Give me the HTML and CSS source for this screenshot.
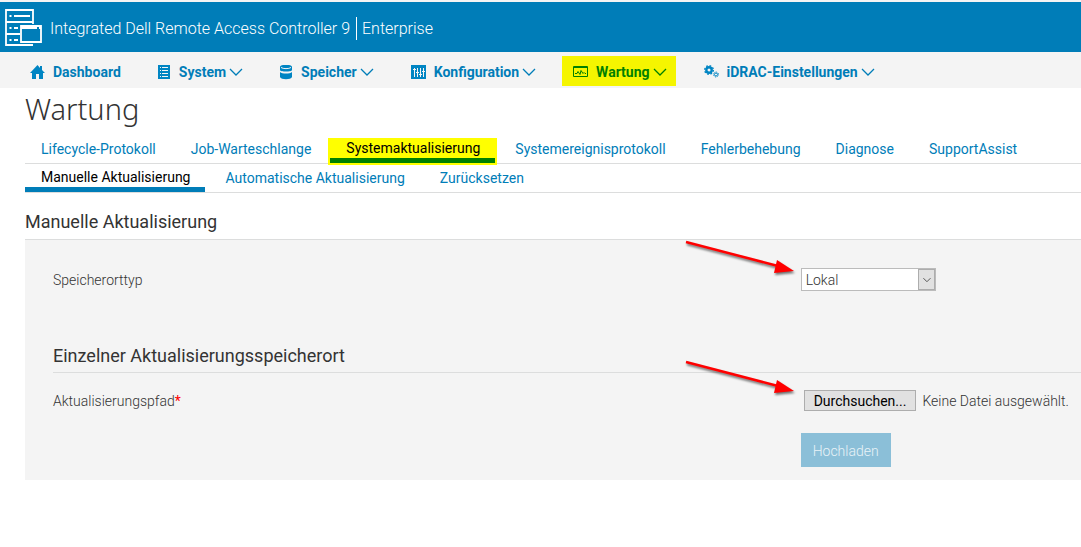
FILE: index.html
```html
<!DOCTYPE html>
<html lang="de">
<head>
<meta charset="utf-8">
<title>iDRAC9 – Wartung</title>
<meta name="viewport" content="width=device-width,initial-scale=1">
<link rel="stylesheet" href="styles.css">
</head>
<body>
<header class="banner">
  <svg class="logo" width="38" height="38" viewBox="0 0 38 38" fill="none" stroke="#fff" stroke-width="1.8">
    <path d="M1 1h27v12H1zM1 13v12h14M1 25v11h27M28 13v2"/>
    <path d="M4.500 7h2M9 7h16M4.500 19h2M9 19h4M4.500 31h2M9 31h4"/>
    <path d="M16 17h20v16H16z"/>
    <path d="M16 18.500h16M34 18.500h2" stroke-width="3"/>
  </svg>
  <span class="product">Integrated Dell Remote Access Controller 9</span>
  <span class="edition">Enterprise</span>
</header>

<nav class="mainnav">
  <a href="#">
    <svg class="ico" viewBox="0 0 15 15"><path fill="currentColor" d="M7.500 0L0 8h2v6h4V9h3v5h4V8h2l-3-3V1h-2v2z"/></svg>
    Dashboard
  </a>
  <a href="#">
    <svg class="ico slim" viewBox="0 0 13 15"><path fill="currentColor" d="M0 0h12v14H0z"/><path stroke="#f4f4f4" d="M2 2.500h1M4 2.500h6M2 5.500h1M4 5.500h6M2 8.500h1M4 8.500h6M2 11.500h1M4 11.500h6"/></svg>
    System
    <svg class="chev" viewBox="0 0 14 8"><path d="M1 1l6 6 6-6"/></svg>
  </a>
  <a href="#">
    <svg class="ico slim" viewBox="0 0 13 15"><path fill="currentColor" d="M0 2c0-3 12-3 12 0v3c0 2-12 2-12 0zM0 7c2 2 10 2 12 0v5c-1 3-11 3-12 0z"/><path fill="none" stroke="#f4f4f4" d="M1 2.500c2 1.500 8 1.500 10 0"/></svg>
    Speicher
    <svg class="chev" viewBox="0 0 14 8"><path d="M1 1l6 6 6-6"/></svg>
  </a>
  <a href="#">
    <svg class="ico" viewBox="0 0 15 15"><path fill="currentColor" d="M0 0h15v14H0z"/><path stroke="#f4f4f4" d="M3.500 3v9M6.500 3v9M9.500 3v9M12.500 3v9M2 4.500h3M5 7.500h3M8 9.500h3M11 6.500h3"/></svg>
    Konfiguration
    <svg class="chev" viewBox="0 0 14 8"><path d="M1 1l6 6 6-6"/></svg>
  </a>
  <a href="#" class="active">
    <svg class="ico" viewBox="0 0 15 15" fill="none" stroke="currentColor"><path d="M.5 1.500h14v10H.5zM.5 2.500h14"/><path d="M2 8.500h2l1-2 2 3 1-4 2 3 1-1 1 1h1"/></svg>
    Wartung
    <svg class="chev" viewBox="0 0 14 8"><path d="M1 1l6 6 6-6"/></svg>
  </a>
  <a href="#">
    <svg class="ico" viewBox="0 0 15 15" fill="none" stroke="currentColor">
      <circle cx="5" cy="5" r="2.700" stroke-width="2.400"/>
      <circle cx="5" cy="5" r="4.300" stroke-width="1.400" stroke-dasharray="1.700 1.677"/>
      <circle cx="12" cy="9.500" r="1.500"/>
      <circle cx="12" cy="9.500" r="2.500" stroke-dasharray="1 .963"/>
    </svg>
    iDRAC-Einstellungen
    <svg class="chev" viewBox="0 0 14 8"><path d="M1 1l6 6 6-6"/></svg>
  </a>
</nav>

<main>
  <h1>Wartung</h1>

  <nav class="tabs">
    <a href="#">Lifecycle-Protokoll</a>
    <a href="#">Job-Warteschlange</a>
    <a href="#" class="current marked">Systemaktualisierung</a>
    <a href="#">Systemereignisprotokoll</a>
    <a href="#">Fehlerbehebung</a>
    <a href="#">Diagnose</a>
    <a href="#">SupportAssist</a>
  </nav>
  <nav class="tabs subtabs">
    <a href="#" class="current">Manuelle Aktualisierung</a>
    <a href="#">Automatische Aktualisierung</a>
    <a href="#">Zurücksetzen</a>
  </nav>

  <h2>Manuelle Aktualisierung</h2>
  <form class="panel">
    <div class="row">
      <label for="location">Speicherorttyp</label>
      <div class="control">
        <svg class="arrow" width="117" height="44" viewBox="0 0 117 44"><path class="shaft" d="M2 8l92 24"/><path class="head" d="M93 26l17 11-20 2z"/></svg>
        <div class="select">
          <select id="location">
            <option>Lokal</option>
            <option>HTTP</option>
            <option>TFTP</option>
          </select>
          <svg class="drop" viewBox="0 0 17 21"><path d="M5 9l4 4 4-4"/></svg>
        </div>
      </div>
    </div>

    <h3>Einzelner Aktualisierungsspeicherort</h3>
    <div class="row">
      <label for="browse">Aktualisierungspfad<span class="req">*</span></label>
      <div class="control file">
        <svg class="arrow" width="117" height="44" viewBox="0 0 117 44"><path class="shaft" d="M2 8l92 24"/><path class="head" d="M93 26l17 11-20 2z"/></svg>
        <button type="button" id="browse" class="browse">Durchsuchen...</button>
        <span>Keine Datei ausgewählt.</span>
      </div>
    </div>
    <div class="row actions">
      <button type="submit" class="upload" disabled>Hochladen</button>
    </div>
  </form>
</main>
</body>
</html>
```
FILE: styles.css
```css
:root{--blue:#007db8;--line:#dcdddd;--grey:#f4f4f4;--mark:#ff0}
*{box-sizing:border-box}
body{margin:0;font:300 14px/20px Roboto,sans-serif;color:#333;background:#fff}
a{color:var(--blue);text-decoration:none}

.banner{display:flex;align-items:center;height:52px;padding:2px 5px 0;background:var(--blue);border-top:2px solid var(--grey);color:#fff;font-size:16px;line-height:23px}
.logo{margin-right:7px}
.edition{border-left:1px solid #fff;margin-left:6px;padding-left:5px}

.mainnav{display:flex;gap:17px;height:36px;padding:4px 19px;background:var(--grey);font-weight:700}
.mainnav a{display:flex;align-items:center;height:30px;padding:2px 9px 0 11px;white-space:nowrap}
.mainnav .active{background:#f5f500;color:green}
.ico{width:15px;height:15px;margin-right:8px;color:#0085c3}
.active .ico{color:green}
.slim{width:13px}
.chev{width:14px;height:8px;margin-left:3px;fill:none;stroke:currentColor;stroke-width:1.3}

main{padding-left:25px}
h1{margin:0;font:300 29px/42px "Noto Sans",sans-serif}
.tabs{display:flex;height:34px;border-bottom:1px solid var(--line);font-weight:400}
.tabs a{padding:9px 15px 0 16px;margin-right:4px;white-space:nowrap}
.tabs .current{color:#000;padding-top:8px;border-bottom:5px solid var(--blue)}
.tabs .marked{margin-top:10px;padding-top:0;line-height:16px;border-color:green;background:var(--mark);box-shadow:0 0 0 2px var(--mark)}
.subtabs{height:29px}
.subtabs a{padding-top:4px}
.subtabs .current{padding-top:3px}

h2,h3{margin:0;font-size:18px;font-weight:400;line-height:24px;border-bottom:1px solid var(--line)}
h2{padding:17px 0 5px}
h3{padding-bottom:4px;margin:53px 0 17px}
.panel{padding:28px 0 13px 28px;background:var(--grey)}
.row{display:grid;grid-template-columns:8fr 3fr;align-items:center}
.control{position:relative}
.req{color:red;font-weight:400}
.select{position:relative;width:135px}
select{appearance:none;display:block;width:100%;height:23px;padding:0 20px 0 4px;border:1px solid #bbb;border-radius:0;background:#fff;color:#333;font:inherit}
.drop{position:absolute;top:1px;right:1px;width:17px;height:21px;background:#e1e1e1;border:1px solid #adadad;fill:none;stroke:#444;pointer-events:none}
.file{display:flex;align-items:center;padding-left:3px;white-space:nowrap}
.browse{height:21px;margin-right:6px;padding:0 9px;border:1px solid #adadad;background:#e1e1e1;color:#000;font:inherit;font-weight:400}
.actions{margin-top:22px}
.upload{grid-column:2;justify-self:start;height:34px;padding:2px 12px 0;border:0;background:#8bbfd8;color:#e8f2f7;font:inherit}

/* red pointers */
.arrow{position:absolute;right:100%;bottom:13px;pointer-events:none;filter:drop-shadow(1px 2px 1px #0008)}
.shaft{fill:none;stroke:red;stroke-width:2.5}
.head{fill:red}
```
